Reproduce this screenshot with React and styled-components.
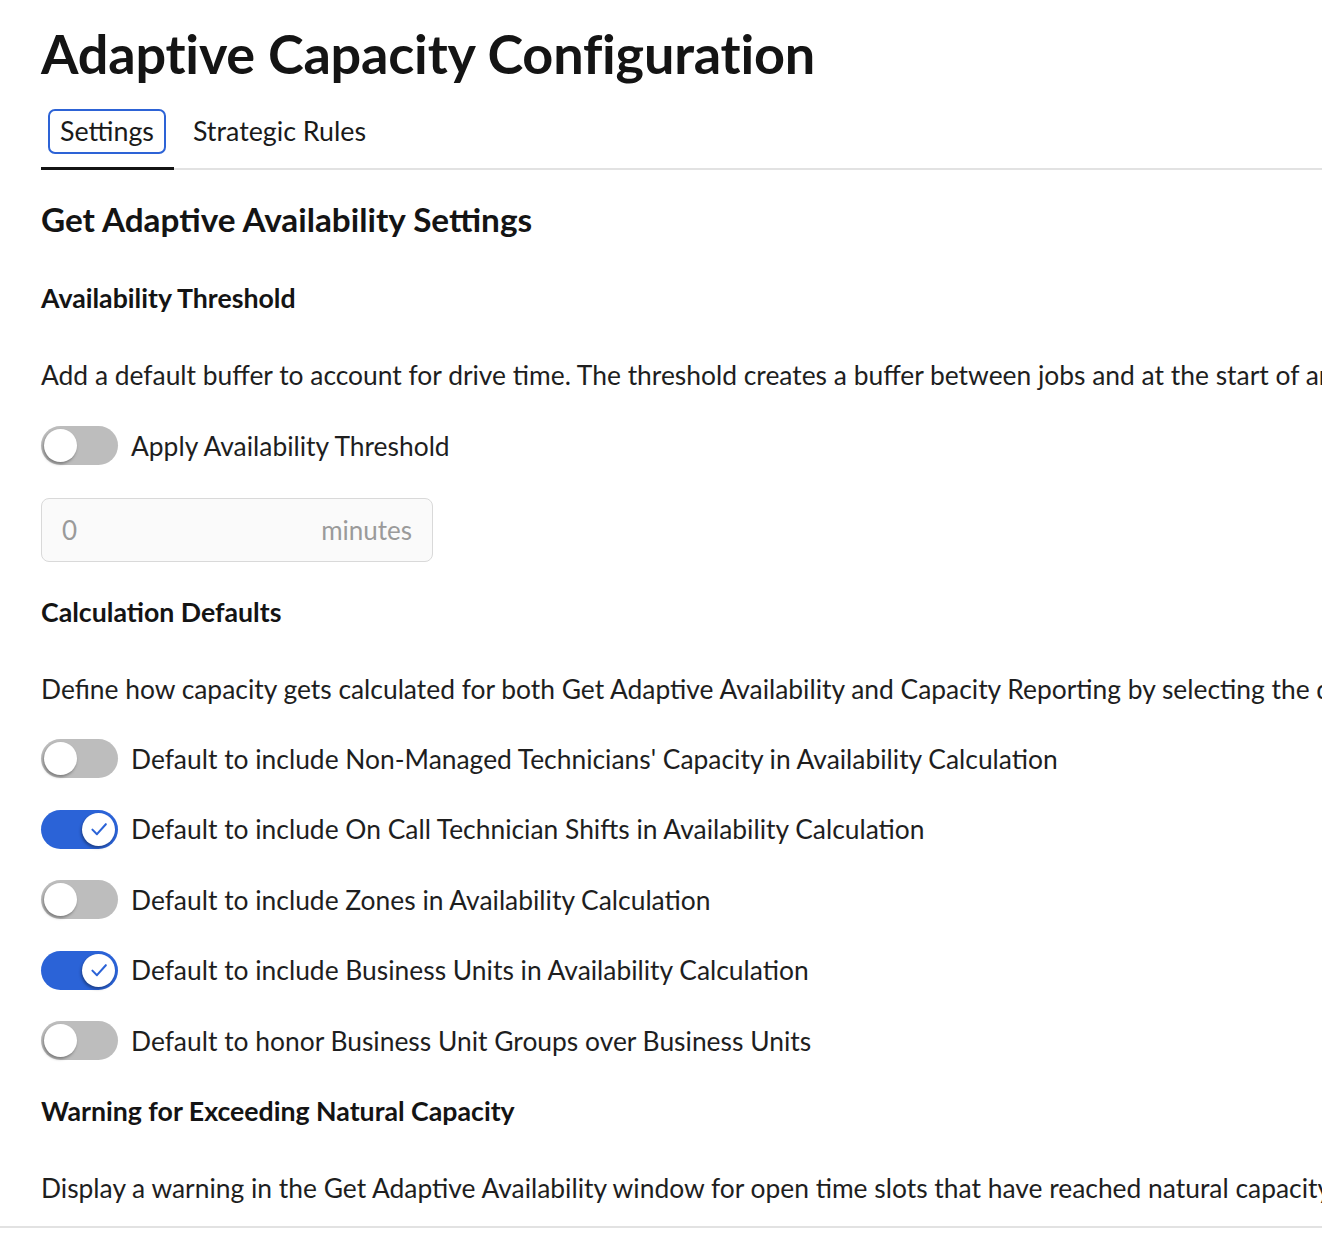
import styled, { createGlobalStyle } from "styled-components";

const GlobalStyle = createGlobalStyle`
  html, body {
    margin: 0;
    padding: 0;
    background: #fff;
    overflow: hidden;
  }
  body {
    font-family: Lato, "Noto Sans", sans-serif;
    color: #181818;
  }
`;

const Page = styled.div`
  width: 1322px;
  overflow: hidden;
`;

const Content = styled.div`
  padding: 22px 0 22px 41px;
`;

const Title = styled.h1`
  margin: 0;
  font-size: 54px;
  line-height: 64px;
  font-weight: 700;
  letter-spacing: -0.2px;
  color: #141414;
`;

const TabBar = styled.div`
  display: flex;
  align-items: flex-end;
  margin-top: 23px;
  border-bottom: 2px solid #e2e2e2;
`;

const Tab = styled.div`
  position: relative;
  padding: 0 8px 14px 7px;
  ${({ active }) =>
    active &&
    `&::after {
      content: "";
      position: absolute;
      left: 0;
      right: 0;
      bottom: -2px;
      height: 3px;
      background: #141414;
    }`}
`;

const TabLabel = styled.span`
  display: block;
  padding: 1px 10px 0;
  height: 40px;
  line-height: 39px;
  font-size: 26.8px;
  color: #1a1a1a;
  border: 2px solid ${({ active }) => (active ? "#2d63d6" : "transparent")};
  border-radius: 7px;
`;

const SectionTitle = styled.h2`
  margin: 29px 0 0;
  font-size: 33.3px;
  line-height: 40px;
  font-weight: 700;
  color: #141414;
`;

const Heading = styled.h3`
  margin: ${({ top }) => top || 40}px 0 0;
  font-size: 26.7px;
  line-height: 32px;
  font-weight: 700;
  color: #141414;
`;

const Description = styled.p`
  margin: 45px 0 0;
  font-size: 26.4px;
  line-height: 32px;
  white-space: nowrap;
  color: #1e1e1e;
`;

const ToggleRow = styled.label`
  display: flex;
  align-items: center;
  gap: 13px;
  margin-top: ${({ top }) => top || 31}px;
  font-size: 26.4px;
  line-height: 32px;
  color: #1e1e1e;
  white-space: nowrap;
`;

const Track = styled.span`
  position: relative;
  flex: none;
  width: 77px;
  height: 39px;
  border-radius: 20px;
  background: ${({ on }) => (on ? "#2b63d7" : "#bdbdbd")};
`;

const Knob = styled.span`
  position: absolute;
  top: 3px;
  left: ${({ on }) => (on ? "41px" : "3px")};
  width: 33px;
  height: 33px;
  border-radius: 50%;
  background: #fff;
  box-shadow: -1px 2px 3px rgba(0, 0, 0, 0.35);
  display: flex;
  align-items: center;
  justify-content: center;
`;

const InputBox = styled.div`
  display: flex;
  align-items: center;
  justify-content: space-between;
  box-sizing: border-box;
  width: 392px;
  height: 64px;
  margin-top: 33px;
  padding: 0 20px;
  background: #fafafa;
  border: 1px solid #d9d9d9;
  border-radius: 8px;
  font-size: 26px;
  color: #9a9a9a;
`;

const Footer = styled.div`
  border-top: 2px solid #e2e2e2;
  height: 20px;
`;

const Check = () => (
  <svg width="24" height="24" viewBox="0 0 20 20" fill="none">
    <path d="M4.5 10.5l3.8 3.8 7.4-8.3" stroke="#2b63d7" strokeWidth="1.7" strokeLinecap="round" strokeLinejoin="round" />
  </svg>
);

const Toggle = ({ on, label, top }) => (
  <ToggleRow top={top}>
    <Track on={on}>
      <Knob on={on}>{on && <Check />}</Knob>
    </Track>
    {label}
  </ToggleRow>
);

const defaults = [
  { on: false, label: "Default to include Non-Managed Technicians' Capacity in Availability Calculation" },
  { on: true, label: "Default to include On Call Technician Shifts in Availability Calculation" },
  { on: false, label: "Default to include Zones in Availability Calculation" },
  { on: true, label: "Default to include Business Units in Availability Calculation" },
  { on: false, label: "Default to honor Business Unit Groups over Business Units" },
];

export default function App() {
  return (
    <Page>
      <GlobalStyle />
      <Content>
        <Title>Adaptive Capacity Configuration</Title>
        <TabBar>
          <Tab active>
            <TabLabel active>Settings</TabLabel>
          </Tab>
          <Tab>
            <TabLabel>Strategic Rules</TabLabel>
          </Tab>
        </TabBar>
        <SectionTitle>Get Adaptive Availability Settings</SectionTitle>

        <Heading top={43}>Availability Threshold</Heading>
        <Description>
          Add a default buffer to account for drive time. The threshold creates a buffer between jobs and at the start of arrival windows.
        </Description>
        <Toggle on={false} label="Apply Availability Threshold" top={35} />
        <InputBox>
          <span>0</span>
          <span>minutes</span>
        </InputBox>

        <Heading top={34}>Calculation Defaults</Heading>
        <Description>
          Define how capacity gets calculated for both Get Adaptive Availability and Capacity Reporting by selecting the default options below.
        </Description>
        {defaults.map((d, i) => (
          <Toggle key={i} on={d.on} label={d.label} top={i === 0 ? 34 : 31.5} />
        ))}

        <Heading top={35}>Warning for Exceeding Natural Capacity</Heading>
        <Description>
          Display a warning in the Get Adaptive Availability window for open time slots that have reached natural capacity.
        </Description>
      </Content>
      <Footer />
    </Page>
  );
}
